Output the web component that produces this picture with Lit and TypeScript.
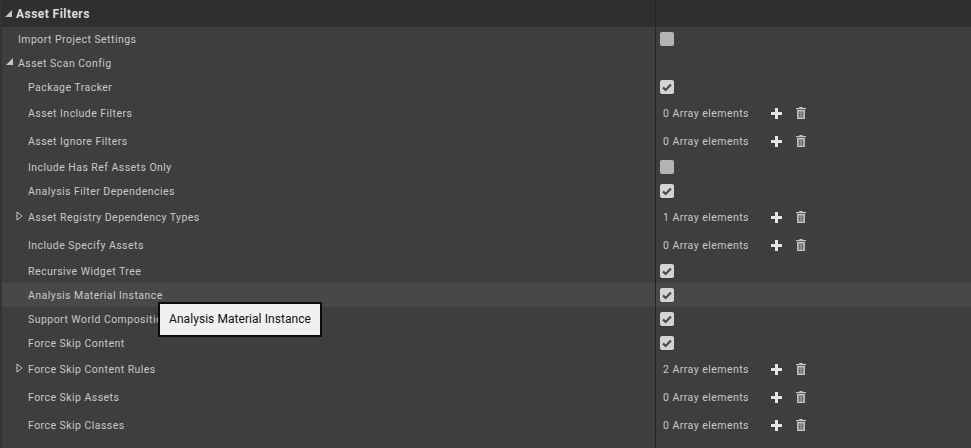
import { LitElement, html, css, svg } from "lit";
import { customElement } from "lit/decorators.js";

type Row = { label: string; indent: number; h: number; arrow?: "open" | "closed"; value: "check" | "empty" | "none" | number; hover?: boolean };

const rows: Row[] = [
  { label: "Import Project Settings", indent: 1, h: 24, value: "empty" },
  { label: "Asset Scan Config", indent: 1, h: 24, arrow: "open", value: "none" },
  { label: "Package Tracker", indent: 2, h: 24, value: "check" },
  { label: "Asset Include Filters", indent: 2, h: 28, value: 0 },
  { label: "Asset Ignore Filters", indent: 2, h: 28, value: 0 },
  { label: "Include Has Ref Assets Only", indent: 2, h: 24, value: "empty" },
  { label: "Analysis Filter Dependencies", indent: 2, h: 24, value: "check" },
  { label: "Asset Registry Dependency Types", indent: 2, h: 28, arrow: "closed", value: 1 },
  { label: "Include Specify Assets", indent: 2, h: 28, value: 0 },
  { label: "Recursive Widget Tree", indent: 2, h: 24, value: "check" },
  { label: "Analysis Material Instance", indent: 2, h: 24, value: "check", hover: true },
  { label: "Support World Composition", indent: 2, h: 24, value: "check" },
  { label: "Force Skip Content", indent: 2, h: 24, value: "check" },
  { label: "Force Skip Content Rules", indent: 2, h: 28, arrow: "closed", value: 2 },
  { label: "Force Skip Assets", indent: 2, h: 28, value: 0 },
  { label: "Force Skip Classes", indent: 2, h: 28, value: 0 },
];

const openArrow = svg`<svg width="9" height="9" viewBox="0 0 9 9"><path d="M8 1V8H1Z" fill="#c4c4c4"/></svg>`;
const closedArrow = svg`<svg width="7" height="10" viewBox="0 0 7 10"><path d="M1 1L6 5L1 9Z" fill="none" stroke="#c4c4c4" stroke-width="1"/></svg>`;
const plus = svg`<svg width="11" height="11" viewBox="0 0 11 11"><path d="M4 0H7V4H11V7H7V11H4V7H0V4H4Z" fill="#e4e4e4"/></svg>`;
const trash = svg`<svg width="10" height="12" viewBox="0 0 11 12" preserveAspectRatio="none"><path d="M4 0H7L7.6 1H11V2.3H0V1H3.4Z" fill="#c8c8c8"/><path d="M1.2 3H9.8V12H1.2ZM3 4.2V10.8H4V4.2ZM5 4.2V10.8H6V4.2ZM7 4.2V10.8H8V4.2Z" fill="#c8c8c8" fill-rule="evenodd"/></svg>`;
const tick = svg`<svg width="14" height="14" viewBox="0 0 14 14"><path d="M3 7.4L5.6 10L11 4.4" fill="none" stroke="#4a4a4a" stroke-width="2.2"/></svg>`;

@customElement("app-root")
export class AppRoot extends LitElement {
  static styles = css`
    :host {
      display: block;
      position: relative;
      width: 971px;
      height: 448px;
      overflow: hidden;
      background: #3e3e3e;
      font-family: Roboto, "Noto Sans", sans-serif;
      font-size: 10.5px;
      letter-spacing: 0.46px;
      color: #c8c8c8;
    }
    .panel {
      display: flex;
      flex-direction: column;
      height: 100%;
      border-left: 2px solid #343434;
      box-sizing: border-box;
    }
    .header {
      flex: none;
      height: 27px;
      display: flex;
      background: #2f2f2f;
    }
    .header .name {
      width: 653px;
      display: flex;
      align-items: center;
      padding-left: 2px;
      gap: 3px;
      box-sizing: border-box;
      font-size: 12px;
      font-weight: 700;
      letter-spacing: 0.45px;
      color: #dcdcdc;
    }
    .row { display: flex; flex: none; }
    .row.hover { background: #484848; }
    .name-cell {
      width: 653px;
      box-sizing: border-box;
      display: flex;
      align-items: center;
      position: relative;
    }
    .indent-1 { padding-left: 16px; }
    .indent-2 { padding-left: 26px; }
    .arrow {
      position: absolute;
      display: flex;
      align-items: center;
    }
    .arrow.open { left: 3px; top: 6px; }
    .arrow.closed { left: 14px; top: 8px; }
    .value-cell {
      flex: 1;
      display: flex;
      align-items: center;
      border-left: 1px solid #232323;
      padding-left: 4px;
    }
    .box {
      width: 14px;
      height: 14px;
      border-radius: 2px;
      background: #b4b4b4;
      display: flex;
    }
    .box.on { background: #d4d4d4; }
    .arr {
      display: flex;
      align-items: center;
      padding-left: 3px;
    }
    .arr .count { width: 108px; }
    .arr .trash { margin-left: 14px; display: flex; }
    .arr .plus { display: flex; }
    .filler { flex: 1; display: flex; }
    .tooltip {
      position: absolute;
      left: 158px;
      top: 302px;
      width: 164px;
      height: 35px;
      box-sizing: border-box;
      background: #f0f0f0;
      border: 2px solid #0c0c0c;
      color: #111;
      font-size: 12px;
      letter-spacing: 0.06px;
      display: flex;
      align-items: center;
      padding: 0 0 1px 9px;
      white-space: nowrap;
    }
  `;

  private value(r: Row) {
    if (r.value === "check") return html`<div class="box on">${tick}</div>`;
    if (r.value === "empty") return html`<div class="box"></div>`;
    if (typeof r.value === "number")
      return html`<div class="arr"><span class="count">${r.value} Array elements</span><span class="plus">${plus}</span><span class="trash">${trash}</span></div>`;
    return null;
  }

  render() {
    return html`
      <div class="panel">
        <div class="header">
          <div class="name">${openArrow}<span>Asset Filters</span></div>
          <div class="value-cell"></div>
        </div>
        ${rows.map(
          (r) => html`<div class="row ${r.hover ? "hover" : ""}" style="height:${r.h}px">
            <div class="name-cell indent-${r.indent}">
              ${r.arrow ? html`<span class="arrow ${r.arrow}">${r.arrow === "open" ? openArrow : closedArrow}</span>` : null}
              <span>${r.label}</span>
            </div>
            <div class="value-cell">${this.value(r)}</div>
          </div>`
        )}
        <div class="filler"><div class="name-cell"></div><div class="value-cell"></div></div>
      </div>
      <div class="tooltip">Analysis Material Instance</div>
    `;
  }
}
